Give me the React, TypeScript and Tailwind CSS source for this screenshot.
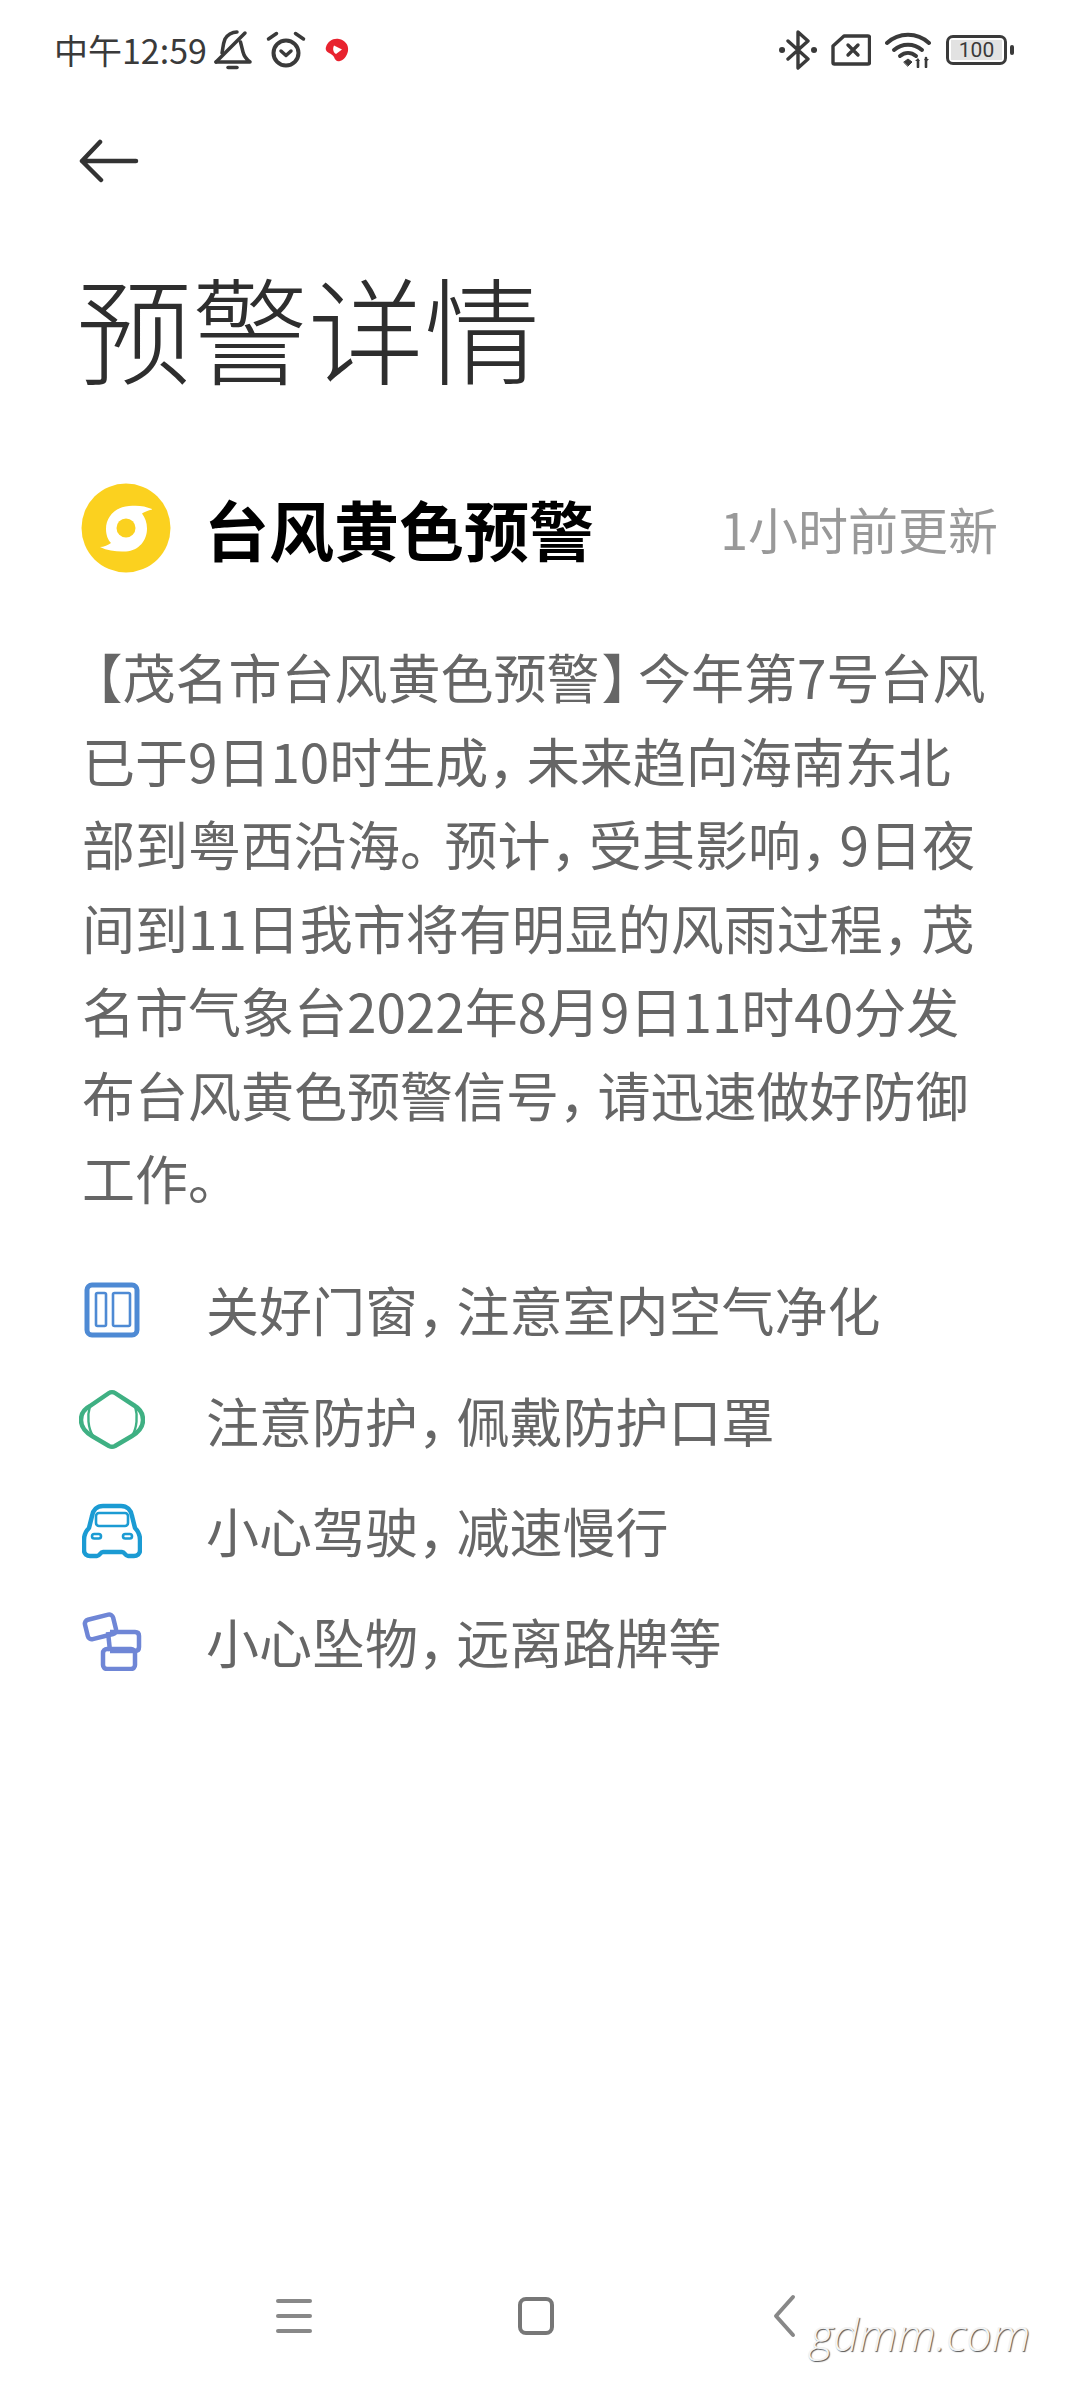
import type { ReactNode } from 'react';

const cjk = { fontFamily: '"Noto Sans CJK SC", "Noto Sans", Roboto, sans-serif' };

function BellOff() {
  return (
    <svg width="40" height="40" viewBox="0 0 40 40" fill="none" stroke="#3a3a3a" strokeWidth="3.500" strokeLinecap="round" strokeLinejoin="round">
      <path d="M3 32h34c-4-3-6-6-7-10l-2.500-10" />
      <path d="M9 23c1-5 1-9 3-14 2-4 7-7 12-7" />
      <path d="M3 32 32 3" />
      <path d="M15 37.500h9" />
    </svg>
  );
}

function Alarm() {
  return (
    <svg width="40" height="40" viewBox="0 0 40 40" fill="none" stroke="#3a3a3a" strokeLinecap="round" strokeLinejoin="round">
      <circle cx="20" cy="23" r="12.500" strokeWidth="4" />
      <path d="M15 21l5 4.500 5-4.500" strokeWidth="3.500" />
      <path d="M2.500 9l8-5.500M37.500 9l-8-5.500" strokeWidth="3.500" />
    </svg>
  );
}

function RedDot() {
  return (
    <svg width="24" height="24" viewBox="0 0 24 24">
      <path d="M1 9C3 3 8 0 14 1c6 1 10 6 9 12-1 5-4 9-8 10-3 1-5-1-6-4-1-2-3-3-5-4-2-1-4-3-3-6Z" fill="#e8232f" />
      <path d="M9 7.500 17 11.500 11 16c-2-1-4-4-2-8.500Z" fill="#fff" />
    </svg>
  );
}

function Bluetooth() {
  return (
    <svg width="38" height="40" viewBox="0 0 38 40" fill="none" stroke="#3a3a3a" strokeWidth="3.400" strokeLinecap="round" strokeLinejoin="round">
      <path d="M9 11l20 18-10 9V2l10 9-20 18" />
      <path d="M3 20h.1M35 20h.1" strokeWidth="6" />
    </svg>
  );
}

function SimX() {
  return (
    <svg width="40" height="32" viewBox="0 0 40 32" fill="none" stroke="#3a3a3a" strokeLinecap="round" strokeLinejoin="round">
      <path d="M13 2h24a1.500 1.500 0 0 1 1.500 1.500v25a1.500 1.500 0 0 1-1.500 1.500H3.500A1.500 1.500 0 0 1 2 28.500V12Z" strokeWidth="3.400" />
      <path d="M17 11l10 10M27 11 17 21" strokeWidth="3.400" />
    </svg>
  );
}

function Wifi() {
  return (
    <svg width="46" height="36" viewBox="0 0 46 36" fill="none" stroke="#3a3a3a" strokeLinecap="round">
      <path d="M2 11c12-11 30-11 42 0" strokeWidth="4" />
      <path d="M9 18c8-7 20-7 28 0" strokeWidth="4" />
      <path d="M15 24c5-4 11-4 16 0" strokeWidth="4" />
      <path d="M19 30l4-3 4 3-4 4Z" fill="#3a3a3a" strokeWidth="1" />
      <path d="M33 35v-6M41 35v-9" strokeWidth="2.600" />
      <path d="M30 29h5l-2-3ZM39 27h5l-3 3Z" fill="#3a3a3a" strokeWidth="0" />
    </svg>
  );
}

function Battery() {
  return (
    <div className="flex items-center gap-[3px]">
      <div className="flex h-[30px] w-[61px] items-center justify-center rounded-[7px] border-[3px] border-[#3a3a3a] p-[2px]">
        <div className="flex h-full w-full items-center justify-center bg-[#e2e2e2] text-[21px] leading-none text-[#3a3a3a]" style={{ fontFamily: 'Roboto, sans-serif' }}>100</div>
      </div>
      <div className="h-[10px] w-[4px] rounded-sm bg-[#3a3a3a]" />
    </div>
  );
}

function Typhoon() {
  return (
    <svg width="90" height="90" viewBox="0 0 90 90">
      <circle cx="45" cy="45" r="44.500" fill="#fbd11f" />
      <path d="M71 26C64 23 57 22 48 23 34 24 25 34 25 46c0 6 2 11 5 14-3 2-7 4-11 4 8 4 18 5 26 4.500 13-1 21-11 21-23 0-6-2-11-5-15 3-2 6-3 10-4Z" fill="#fff" />
      <circle cx="45" cy="45" r="9.500" fill="#fbd11f" />
    </svg>
  );
}

function WindowIcon() {
  return (
    <svg width="56" height="56" viewBox="0 0 56 56" fill="none" stroke="#4e8ad4" strokeLinejoin="round">
      <rect x="3" y="3" width="50" height="50" rx="5" strokeWidth="5" />
      <rect x="12" y="11" width="10" height="33" rx="1.500" strokeWidth="2.600" />
      <rect x="29" y="11" width="17" height="33" rx="1.500" strokeWidth="2.600" />
    </svg>
  );
}

function Mask() {
  return (
    <svg width="66" height="60" viewBox="0 0 66 60" fill="none" stroke="#3fb083" strokeLinejoin="round" strokeLinecap="round">
      <path d="M30 3c1.500-1 4.500-1 6 0l20 13c5 3 8 8 8 14 0 7-4 12-11 16L36 56c-2 1-4 1-6 0L13 46C6 42 2 37 2 30c0-6 3-11 9-14Z" strokeWidth="4.500" />
      <path d="M11 16c-3 10-2 22 3 30M56 16c3 10 2 22-3 30" strokeWidth="2.400" />
    </svg>
  );
}

function Car() {
  return (
    <svg width="60" height="56" viewBox="0 0 60 56" fill="none" stroke="#1b9bd3" strokeLinejoin="round" strokeLinecap="round">
      <path d="M10 13c1-6 5-10 11-10h18c6 0 10 4 11 10l3 12c3 3 5 7 5 12v10c0 4-3 6-6 6h-6c-3 0-3-4-6-4H21c-3 0-3 4-6 4H8c-3 0-6-2-6-6V37c0-5 2-9 5-12Z" strokeWidth="4.500" />
      <rect x="14" y="10" width="32" height="13" rx="3" strokeWidth="2.600" />
      <rect x="10" y="31" width="9" height="4.500" rx="2.200" strokeWidth="2.600" />
      <rect x="41" y="31" width="9" height="4.500" rx="2.200" strokeWidth="2.600" />
    </svg>
  );
}

function Boxes() {
  return (
    <svg width="60" height="60" viewBox="0 0 60 60" fill="none" stroke="#6f86d6" strokeWidth="4.500" strokeLinejoin="round">
      <rect x="4" y="6" width="29" height="20" rx="4" transform="rotate(-14 18 16)" />
      <path d="M28 21h25c2.500 0 4 1.500 4 4v11c0 2.500-1.500 4-4 4H28" />
      <path d="M26 21l2 19" />
      <rect x="21" y="38" width="32" height="20" rx="4" />
    </svg>
  );
}

function Punct({ text }: { text: string }) {
  const parts = text.split(/([，。【】])/);
  return (
    <>
      {parts.map((p, i) => {
        if (p === '，') return <span key={i} className="mr-[12px] [font-feature-settings:'halt']">{p}</span>;
        if (p === '。') return <span key={i} className="mr-[18px] [font-feature-settings:'halt']">{p}</span>;
        if (p === '【') return <span key={i} className="ml-[14px] [font-feature-settings:'halt']">{p}</span>;
        if (p === '】') return <span key={i} className="ml-[2px] mr-[10px] [font-feature-settings:'halt']">{p}</span>;
        return <span key={i}>{p}</span>;
      })}
    </>
  );
}

const body = [
  '【茂名市台风黄色预警】今年第7号台风',
  '已于9日10时生成，未来趋向海南东北',
  '部到粤西沿海。预计，受其影响，9日夜',
  '间到11日我市将有明显的风雨过程，茂',
  '名市气象台2022年8月9日11时40分发',
  '布台风黄色预警信号，请迅速做好防御',
  '工作。',
];

const tips: [() => ReactNode, string][] = [
  [WindowIcon, '关好门窗，注意室内空气净化'],
  [Mask, '注意防护，佩戴防护口罩'],
  [Car, '小心驾驶，减速慢行'],
  [Boxes, '小心坠物，远离路牌等'],
];

export default function App() {
  return (
    <div className="relative flex h-[2400px] w-[1080px] flex-col overflow-hidden bg-white" style={cjk}>
      <div className="flex h-[100px] items-center justify-between pl-[54px] pr-[66px]">
        <div className="flex items-center">
          <span className="text-[34px] leading-none text-[#3a3a3a]">中午12:59</span>
          <span className="ml-[6px] flex"><BellOff /></span>
          <span className="ml-[13px] flex"><Alarm /></span>
          <span className="ml-[19px] flex"><RedDot /></span>
        </div>
        <div className="flex items-center">
          <Bluetooth />
          <span className="ml-[14px] flex"><SimX /></span>
          <span className="ml-[14px] flex"><Wifi /></span>
          <span className="ml-[15px] flex"><Battery /></span>
        </div>
      </div>

      <div className="mt-[39px] pl-[79px]">
        <svg width="60" height="44" viewBox="0 0 60 44" fill="none" stroke="#333" strokeWidth="4.500" strokeLinecap="round" strokeLinejoin="round">
          <path d="M57 22H3M21 3 3 22l19 19" />
        </svg>
      </div>

      <h1 className="mt-[67px] pl-[76px] text-[116px] font-light leading-[150px] text-[#2e2e2e]">预警详情</h1>

      <div className="mt-[83px] flex items-center pl-[81px] pr-[82px]">
        <Typhoon />
        <span className="ml-[33px] text-[65px] font-bold leading-[90px] text-black">台风黄色预警</span>
        <span className="ml-auto text-[50px] leading-[90px] text-[#999]">1小时前更新</span>
      </div>

      <div className="mt-[62px] pl-[82px] text-[53px] leading-[83.500px] text-[#666]">
        {body.map((l) => (
          <div key={l} className="whitespace-nowrap"><Punct text={l} /></div>
        ))}
      </div>

      <div className="mt-[35px] flex flex-col">
        {tips.map(([Icon, t]) => (
          <div key={t} className="flex h-[110.500px] items-center">
            <div className="flex w-[206px] justify-center pl-[18px]"><Icon /></div>
            <span className="text-[53px] leading-none text-[#666]"><Punct text={t} /></span>
          </div>
        ))}
      </div>

      <div className="mt-auto mb-[64px] flex h-[40px] items-center">
        <div className="ml-[276px] flex h-[36px] w-[36px] flex-col justify-between py-[1px]">
          <div className="h-[4px] rounded bg-[#888]" />
          <div className="h-[4px] rounded bg-[#888]" />
          <div className="h-[4px] rounded bg-[#888]" />
        </div>
        <div className="ml-[206px] h-[38px] w-[36px] rounded-[8px] border-[4px] border-[#777]" />
        <svg className="ml-[218px]" width="24" height="44" viewBox="0 0 24 44" fill="none" stroke="#888" strokeWidth="4" strokeLinecap="round" strokeLinejoin="round">
          <path d="M21 3 4 22l17 19" />
        </svg>
      </div>

      <span className="absolute left-[810px] top-[2311px] text-[45px] font-light italic leading-none text-[#f4f4f4] [text-shadow:1px_1px_1px_#555]" style={{ fontFamily: '"Open Sans", sans-serif' }}>gdmm.com</span>
    </div>
  );
}
